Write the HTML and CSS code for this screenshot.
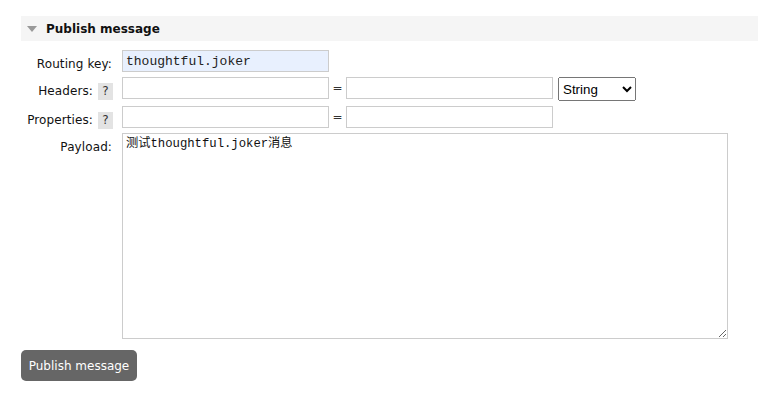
FILE: index.html
```html
<!DOCTYPE html>
<html lang="zh">
<head>
<meta charset="utf-8">
<title>Publish message</title>
<link rel="stylesheet" href="styles.css">
</head>
<body>
<div class="page">
  <section class="section">
    <h2 class="section-header"><span class="arrow"></span>Publish message</h2>
    <form class="form">
      <label class="label">Routing key:</label>
      <div class="field"><input class="text autofill" type="text" value="thoughtful.joker"></div>

      <label class="label">Headers: <span class="help">?</span></label>
      <div class="field">
        <input class="text" type="text">
        <span class="eq">=</span>
        <input class="text" type="text">
        <select class="type"><option>String</option><option>Number</option><option>Boolean</option><option>List</option></select>
      </div>

      <label class="label">Properties: <span class="help">?</span></label>
      <div class="field">
        <input class="text" type="text">
        <span class="eq">=</span>
        <input class="text" type="text">
      </div>

      <label class="label">Payload:</label>
      <div class="field"><textarea class="payload">测试thoughtful.joker消息</textarea></div>
    </form>
    <button class="btn" type="button">Publish message</button>
  </section>
</div>
</body>
</html>
```
FILE: styles.css
```css
html, body {
  margin: 0;
  padding: 0;
  background: #fff;
}
body {
  font-family: "DejaVu Sans", Verdana, sans-serif;
  font-size: 12px;
  color: #111;
}
.page {
  padding: 16px 0 0 21px;
}
.section-header {
  margin: 0;
  height: 25px;
  background: #f5f5f5;
  display: flex;
  align-items: center;
  padding-left: 6px;
  font-size: 12px;
  font-weight: bold;
  color: #111;
}
.arrow {
  width: 0;
  height: 0;
  border-left: 5px solid transparent;
  border-right: 5px solid transparent;
  border-top: 6px solid #999;
  margin-right: 9px;
  margin-top: 1px;
}
.form {
  display: grid;
  grid-template-columns: 91px auto;
  column-gap: 10px;
  row-gap: 5px;
  align-items: start;
  margin-top: 9px;
}
.label {
  box-sizing: border-box;
  height: 22px;
  display: flex;
  justify-content: flex-end;
  align-items: flex-start;
  gap: 5px;
  padding-top: 7px;
  line-height: 15px;
  white-space: nowrap;
  letter-spacing: 0.1px;
}
.help {
  display: inline-block;
  flex: none;
  width: 15px;
  height: 17px;
  line-height: 17px;
  margin-top: -1px;
  margin-right: -1px;
  text-align: center;
  background: #e3e3e3;
  color: #333;
  font-size: 12px;
  letter-spacing: 0;
}
.field {
  display: flex;
  align-items: flex-start;
}
.text {
  box-sizing: border-box;
  width: 207px;
  height: 22px;
  border: 1px solid #ccc;
  padding: 0 3px;
  margin: 0;
  font-family: "Liberation Mono", "DejaVu Sans Mono", monospace;
  font-size: 13px;
  color: #222;
  background: #fff;
  outline: none;
}
.text.autofill {
  background: #e8f0fe;
}
.eq {
  width: 17px;
  text-align: center;
  line-height: 22px;
  color: #333;
}
.type {
  box-sizing: border-box;
  margin: 0 0 0 5px;
  width: 78px;
  height: 24px;
  font-family: "Liberation Sans", Arial, sans-serif;
  font-size: 13.33px;
  color: #000;
}
.payload {
  box-sizing: border-box;
  width: 606px;
  height: 206px;
  margin: 0;
  border: 1px solid #ccc;
  padding: 2px 3px;
  font-family: "Liberation Mono", "Noto Sans CJK SC", monospace;
  font-size: 12.25px;
  line-height: 17px;
  color: #111;
  outline: none;
}
.btn {
  display: block;
  margin-top: 11px;
  box-sizing: border-box;
  width: 116px;
  height: 31px;
  border: none;
  border-radius: 5px;
  background: #666;
  color: #fff;
  font-family: "DejaVu Sans", Verdana, sans-serif;
  font-size: 12px;
  padding: 0;
}
```
